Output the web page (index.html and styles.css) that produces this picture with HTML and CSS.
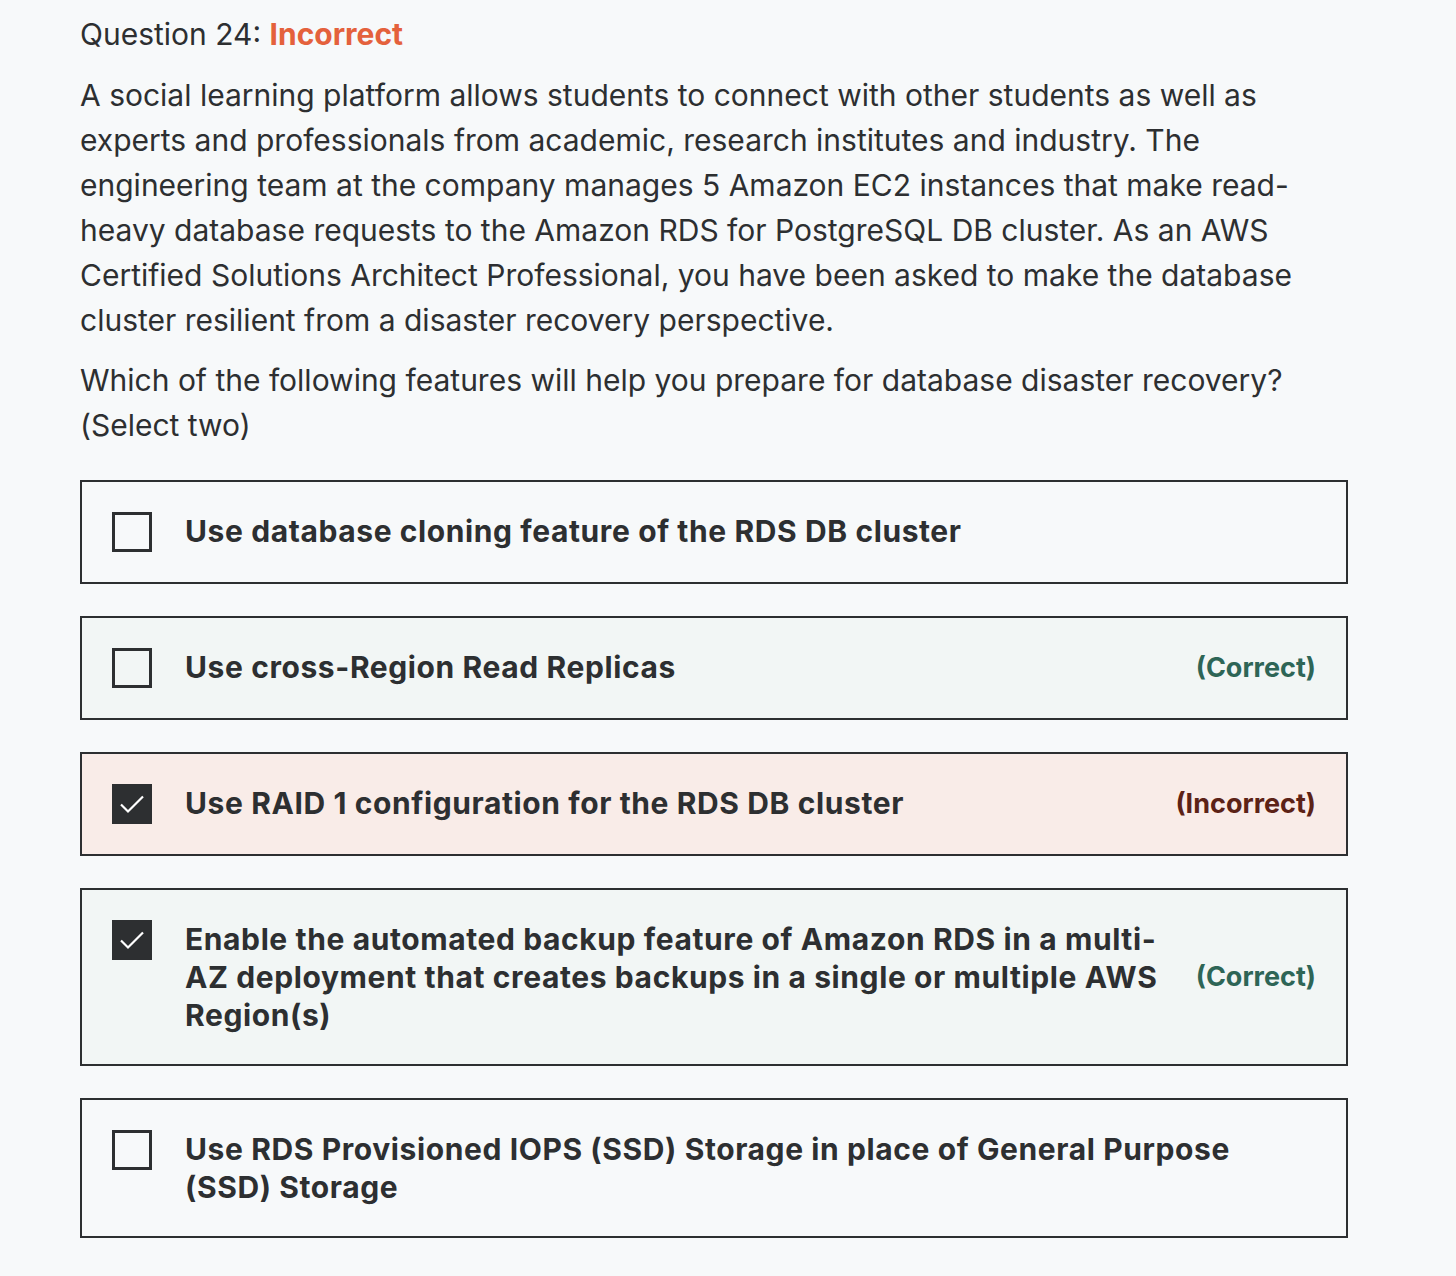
FILE: index.html
```html
<!DOCTYPE html>
<html>
<head>
<meta charset="utf-8">
<link rel="stylesheet" href="styles.css">
</head>
<body>
<div class="page">
  <div class="title">Question 24: <span class="status">Incorrect</span></div>
  <p class="prompt">A social learning platform allows students to connect with other students as well as experts and professionals from academic, research institutes and industry. The engineering team at the company manages 5 Amazon EC2 instances that make read-heavy database requests to the Amazon RDS for PostgreSQL DB cluster. As an AWS Certified Solutions Architect Professional, you have been asked to make the database cluster resilient from a disaster recovery perspective.</p>
  <p class="prompt">Which of the following features will help you prepare for database disaster recovery? (Select two)</p>
  <ul class="options">
    <li class="option">
      <span class="check"></span>
      <span class="text">Use database cloning feature of the RDS DB cluster</span>
    </li>
    <li class="option correct">
      <span class="check"></span>
      <span class="text">Use cross-Region Read Replicas</span>
      <span class="label">(Correct)</span>
    </li>
    <li class="option incorrect">
      <span class="check checked"><svg viewBox="0 0 40 40" width="40" height="40"><path d="M9 20.5 L16 27.5 L31 12.5" fill="none" stroke="#fff" stroke-width="2.2"/></svg></span>
      <span class="text">Use RAID 1 configuration for the RDS DB cluster</span>
      <span class="label">(Incorrect)</span>
    </li>
    <li class="option correct">
      <span class="check checked"><svg viewBox="0 0 40 40" width="40" height="40"><path d="M9 20.5 L16 27.5 L31 12.5" fill="none" stroke="#fff" stroke-width="2.2"/></svg></span>
      <span class="text">Enable the automated backup feature of Amazon RDS in a multi-AZ deployment that creates backups in a single or multiple AWS Region(s)</span>
      <span class="label">(Correct)</span>
    </li>
    <li class="option">
      <span class="check"></span>
      <span class="text">Use RDS Provisioned IOPS (SSD) Storage in place of General Purpose (SSD) Storage</span>
    </li>
  </ul>
</div>
</body>
</html>
```
FILE: styles.css
```css
html, body {
  margin: 0;
  padding: 0;
  background: #f7f9fa;
}
body {
  font-family: Inter, "Noto Sans", sans-serif;
  color: #2d2f31;
}
.page {
  width: 1268px;
  padding: 14px 80px 0 80px;
}
.title {
  font-size: 30px;
  line-height: 40px;
  margin-bottom: 19px;
}
.status {
  color: #e4613c;
  font-weight: 700;
}
.prompt {
  font-size: 30px;
  line-height: 45px;
  margin: 0 0 15px 0;
}
.options {
  list-style: none;
  margin: 32px 0 0 0;
  padding: 0;
  display: flex;
  flex-direction: column;
  gap: 32px;
}
.option {
  display: flex;
  align-items: flex-start;
  border: 2px solid #2d2f31;
  padding: 30px 30px 30px 30px;
  background: #f7f9fa;
}
.option.correct {
  background: #f2f6f5;
}
.option.incorrect {
  background: #f9ece8;
}
.check {
  flex: none;
  width: 40px;
  height: 40px;
  box-sizing: border-box;
  border: 3px solid #2d2f31;
  margin-right: 33px;
  margin-top: 0;
}
.check.checked {
  border: none;
  background: #2d2f31;
}
.check svg {
  display: block;
}
.text {
  flex: 1;
  font-size: 30px;
  font-weight: 700;
  line-height: 38px;
  letter-spacing: 0.6px;
}
.label {
  flex: none;
  align-self: center;
  margin-left: 32px;
  font-size: 27px;
  font-weight: 700;
  line-height: 38px;
}
.correct .label {
  color: #2e6556;
}
.incorrect .label {
  color: #5c2216;
}
```
